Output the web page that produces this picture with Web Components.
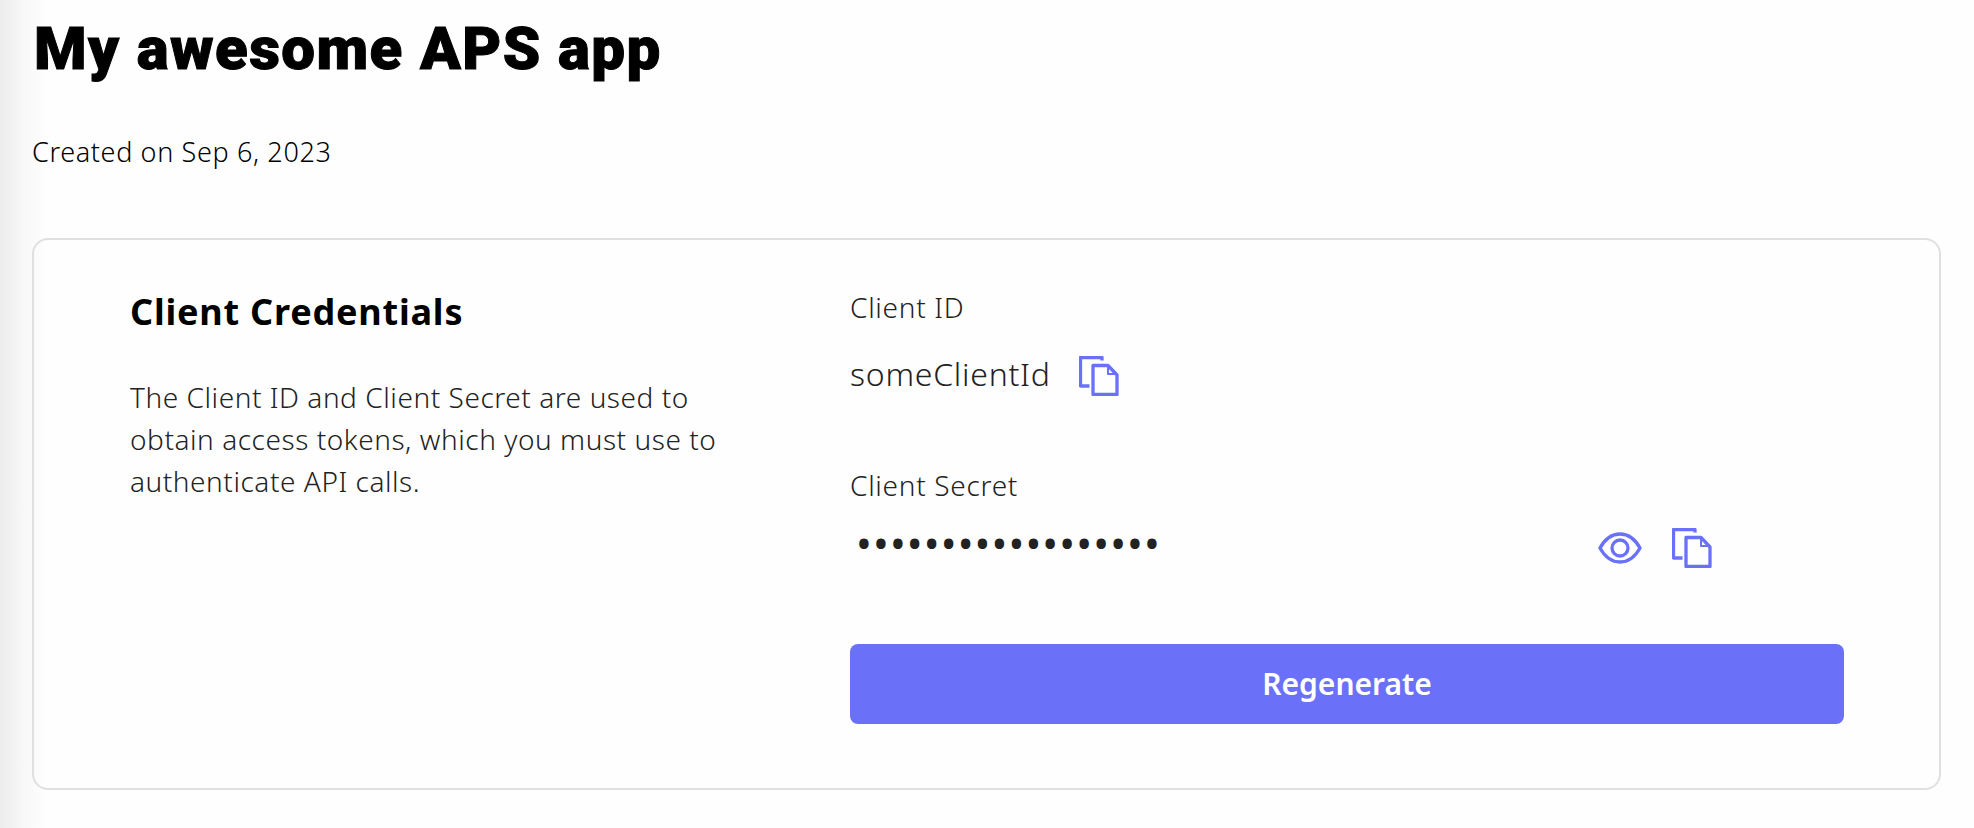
<!DOCTYPE html>
<html>
<head>
<meta charset="utf-8">
<title>My awesome APS app</title>
<style>
    html, body {
        margin: 0;
        padding: 0;
        height: 100%;
    }
    body {
        background: linear-gradient(to right, #ececec 0, #f6f6f6 20px, #fefefe 46px);
        color: #000;
        font-family: "Noto Sans", sans-serif;
    }
</style>
</head>
<body>
<app-page>
    <span slot="title">My awesome APS app</span>
    <span slot="created">Created on Sep 6, 2023</span>
    <credentials-card>
        <span slot="title">Client Credentials</span>
        <span slot="description">The Client ID and Client Secret are used to obtain access tokens, which you must use to authenticate API calls.</span>
        <credential-field label="Client ID" value="someClientId"></credential-field>
        <credential-field label="Client Secret" value="••••••••••••••••••" secret></credential-field>
        <regen-button slot="action">Regenerate</regen-button>
    </credentials-card>
</app-page>

<script>
const appPage = document.createElement('template')
appPage.innerHTML = `
<style>
    :host {
        display: block;
        padding: 18px 33px 0 32px;
    }
    h1 {
        margin: 0 0 0 2px;
        font-family: "Roboto", sans-serif;
        font-size: 60px;
        font-weight: 900;
        line-height: 62px;
        letter-spacing: 1.4px;
        -webkit-text-stroke: 1px #000;
        color: #000;
    }
    p {
        margin: 53px 0 67px 0;
        font-size: 27px;
        font-weight: 300;
        line-height: 38px;
        letter-spacing: .63px;
        color: #000;
    }
</style>
<h1><slot name="title"></slot></h1>
<p><slot name="created"></slot></p>
<slot></slot>
`

class AppPage extends HTMLElement {
    constructor() {
        super()
        this.attachShadow({ mode: "open" })
        this.shadowRoot.appendChild(appPage.content.cloneNode(true))
    }
}

const credentialsCard = document.createElement('template')
credentialsCard.innerHTML = `
<style>
    :host {
        display: grid;
        grid-template-columns: 720px 994px;
        height: 552px;
        box-sizing: border-box;
        padding: 48px 0 0 96px;
        border: 2px solid #e0e0e0;
        border-radius: 16px;
    }
    h2 {
        margin: 0 0 40px 0;
        font-size: 36px;
        font-weight: 700;
        line-height: 48px;
        letter-spacing: .8px;
        color: #000;
    }
    p {
        margin: 0;
        width: 600px;
        font-size: 28px;
        font-weight: 300;
        line-height: 42px;
        letter-spacing: .55px;
        color: #222;
    }
    .fields {
        display: flex;
        flex-direction: column;
    }
    ::slotted([slot="action"]) {
        margin-top: 66px;
    }
</style>
<div>
    <h2><slot name="title"></slot></h2>
    <p><slot name="description"></slot></p>
</div>
<div class="fields">
    <slot></slot>
    <slot name="action"></slot>
</div>
`

class CredentialsCard extends HTMLElement {
    constructor() {
        super()
        this.attachShadow({ mode: "open" })
        this.shadowRoot.appendChild(credentialsCard.content.cloneNode(true))
    }
}

const copyIcon = `
<svg width="40" height="40" viewBox="0 0 40 40" fill="none" stroke="#6a71f8" stroke-width="3.3" stroke-linejoin="round">
    <path d="M23 4.5V1.5H1.5V30H10.5"/>
    <path d="M14 9.5H29L38 19V38.5H14Z"/>
    <path d="M29 9.5V18H38" stroke-width="2"/>
</svg>`

const eyeIcon = `
<svg width="44" height="32" viewBox="0 0 44 32" fill="none" stroke="#6a71f8" stroke-width="3.3">
    <path d="M2 16C7 7 14 2 22 2S37 7 42 16C37 25 30 30 22 30S7 25 2 16Z"/>
    <circle cx="22" cy="16" r="8"/>
</svg>`

const credentialField = document.createElement('template')
credentialField.innerHTML = `
<style>
    :host {
        display: block;
        color: #222;
    }
    label {
        display: block;
        margin-top: 1px;
        font-size: 28px;
        font-weight: 300;
        line-height: 36px;
        letter-spacing: .7px;
    }
    .row {
        display: flex;
        align-items: center;
        height: 60px;
        margin-top: 19px;
    }
    .value {
        font-size: 32px;
        font-weight: 300;
        line-height: 40px;
        letter-spacing: .75px;
    }
    .actions {
        display: flex;
        align-items: center;
        gap: 30px;
        margin-top: 3px;
    }
    :host(:not([secret])) {
        margin-bottom: 62px;
    }
    :host(:not([secret])) .actions {
        margin-left: 28px;
    }
    :host([secret]) .row {
        margin-top: 15px;
    }
    :host([secret]) .value {
        margin-bottom: 10px;
        padding-left: 6px;
        font-size: 42px;
        font-weight: 400;
        letter-spacing: 1.15px;
    }
    :host([secret]) .actions {
        margin-top: 0;
        margin-left: auto;
        margin-right: 132px;
    }
</style>
<label></label>
<div class="row">
    <span class="value"></span>
    <span class="actions"></span>
</div>
`

class CredentialField extends HTMLElement {
    constructor() {
        super()
        this.attachShadow({ mode: "open" })
        this.shadowRoot.appendChild(credentialField.content.cloneNode(true))
    }

    connectedCallback() {
        this.shadowRoot.querySelector("label").textContent = this.getAttribute("label")
        this.shadowRoot.querySelector(".value").textContent = this.getAttribute("value")
        const icons = this.hasAttribute("secret") ? eyeIcon + copyIcon : copyIcon
        this.shadowRoot.querySelector(".actions").innerHTML = icons
    }
}

const regenButton = document.createElement('template')
regenButton.innerHTML = `
<style>
    :host {
        display: flex;
        justify-content: center;
        align-items: center;
        box-sizing: border-box;
        height: 80px;
        padding-bottom: 2px;
        border-radius: 8px;
        background-color: #6a71f8;
        color: #fff;
        font-size: 30px;
        font-weight: 600;
        cursor: pointer;
    }
</style>
<slot></slot>
`

class RegenButton extends HTMLElement {
    constructor() {
        super()
        this.attachShadow({ mode: "open" })
        this.shadowRoot.appendChild(regenButton.content.cloneNode(true))
    }
}

window.customElements.define('app-page', AppPage)
window.customElements.define('credentials-card', CredentialsCard)
window.customElements.define('credential-field', CredentialField)
window.customElements.define('regen-button', RegenButton)
</script>
</body>
</html>
